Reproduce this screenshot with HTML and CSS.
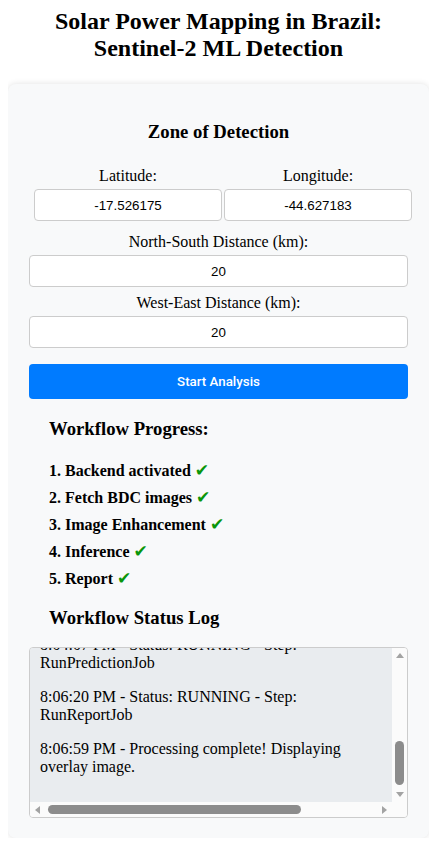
FILE: index.html
```html
<!DOCTYPE html>
<html lang="en">
<head>
<meta charset="utf-8">
<title>Solar Power Mapping in Brazil</title>
<link rel="stylesheet" href="styles.css">
</head>
<body>
<h1 class="title">Solar Power Mapping in Brazil:<br>Sentinel-2 ML Detection</h1>
<div class="card">
  <h3 class="zone-title">Zone of Detection</h3>
  <div class="coords">
    <div class="col">
      <label class="label">Latitude:</label>
      <input class="field" type="text" value="-17.526175">
    </div>
    <div class="col">
      <label class="label">Longitude:</label>
      <input class="field" type="text" value="-44.627183">
    </div>
  </div>
  <label class="label">North-South Distance (km):</label>
  <input class="field field-ns" type="text" value="20">
  <label class="label">West-East Distance (km):</label>
  <input class="field" type="text" value="20">
  <button class="start-btn">Start Analysis</button>

  <div class="progress">
    <h3 class="section-title">Workflow Progress:</h3>
    <ul class="steps">
      <li>1. Backend activated <span class="check">✔</span></li>
      <li>2. Fetch BDC images <span class="check">✔</span></li>
      <li>3. Image Enhancement <span class="check">✔</span></li>
      <li>4. Inference <span class="check">✔</span></li>
      <li>5. Report <span class="check">✔</span></li>
    </ul>
    <h3 class="section-title log-title">Workflow Status Log</h3>
  </div>

  <div class="log">
    <div class="log-view">
      <div class="log-inner">
        <p>7:58:12 PM - Starting analysis...</p>
        <p>7:58:15 PM - Backend activated. Workflow execution started.</p>
        <p>7:59:02 PM - Status: RUNNING - Step: FetchBDCImagesJob</p>
        <p>8:00:41 PM - Status: RUNNING - Step: ImageEnhancementJob</p>
        <p>8:02:10 PM - Status: RUNNING - Step: PrepareInferenceJob</p>
        <p>8:04:07 PM - Status: RUNNING - Step: RunPredictionJob</p>
        <p>8:06:20 PM - Status: RUNNING - Step: RunReportJob</p>
        <p>8:06:59 PM - Processing complete! Displaying overlay image.</p>
      </div>
    </div>
    <div class="vbar">
      <div class="sb-btn"><svg width="8" height="5" viewBox="0 0 8 5"><polygon points="0,5 8,5 4,0" fill="#a3a3a3"/></svg></div>
      <div class="vtrack"><div class="vthumb"></div></div>
      <div class="sb-btn"><svg width="8" height="5" viewBox="0 0 8 5"><polygon points="0,0 8,0 4,5" fill="#a3a3a3"/></svg></div>
    </div>
    <div class="hbar">
      <div class="sb-btn"><svg width="5" height="8" viewBox="0 0 5 8"><polygon points="5,0 5,8 0,4" fill="#a3a3a3"/></svg></div>
      <div class="htrack"><div class="hthumb"></div></div>
      <div class="sb-btn"><svg width="5" height="8" viewBox="0 0 5 8"><polygon points="0,0 0,8 5,4" fill="#a3a3a3"/></svg></div>
    </div>
    <div class="sb-corner"></div>
  </div>
</div>
</body>
</html>
```
FILE: styles.css
```css
html, body {
  background: #ffffff;
}
body {
  margin: 8px;
  font-family: "Liberation Serif", "Times New Roman", serif;
  color: #000;
}
.title {
  font-size: 24px;
  line-height: 27px;
  text-align: center;
  margin: 0 0 22px;
  font-weight: bold;
}
.card {
  background: #f8f9fa;
  border-radius: 8px;
  box-shadow: 0 0 6px rgba(0, 0, 0, 0.12);
  padding: 20px 21px;
}
.zone-title {
  font-size: 18.72px;
  text-align: center;
  margin: 17px 0 24px;
}
.coords {
  display: flex;
  gap: 2px;
  margin: 0 -4px 12px 5px;
}
.col {
  flex: 1;
  display: flex;
  flex-direction: column;
  min-width: 0;
}
.label {
  display: block;
  text-align: center;
  font-family: "Liberation Serif", "Times New Roman", serif;
  font-size: 16px;
  margin-bottom: 4px;
}
.field {
  display: block;
  box-sizing: border-box;
  width: 100%;
  height: 32px;
  margin: 0 0 6px;
  padding: 6px 8px;
  border: 1px solid #ccc;
  border-radius: 4px;
  background: #fff;
  font-family: "Liberation Sans", Arial, sans-serif;
  font-size: 13.33px;
  text-align: center;
  color: #000;
}
.field-ns {
  margin-bottom: 7px;
}
.col .field {
  margin-bottom: 0;
}
.start-btn {
  display: block;
  width: 100%;
  height: 35px;
  margin-top: 16px;
  border: none;
  border-radius: 4px;
  background: #007bff;
  color: #fff;
  font-family: Roboto, "Liberation Sans", sans-serif;
  font-weight: 500;
  font-size: 13.33px;
}
.progress {
  padding: 0 20px;
}
.section-title {
  font-size: 18.72px;
  margin: 19px 0 17px;
}
.steps {
  list-style: none;
  margin: 0;
  padding: 0;
}
.steps li {
  font-family: "Liberation Serif", "Times New Roman", serif;
  font-weight: bold;
  font-size: 16px;
  line-height: 27px;
  height: 27px;
}
.check {
  color: #0a960a;
  font-family: "DejaVu Sans", sans-serif;
  font-weight: normal;
  font-size: 17px;
  line-height: 0;
}
.log-title {
  margin: 15px 0 18px;
}
.log {
  box-sizing: border-box;
  height: 171px;
  border: 1px solid #ccc;
  border-radius: 4px;
  overflow: hidden;
  display: grid;
  grid-template-columns: 1fr 15px;
  grid-template-rows: 1fr 15px;
  background: #fbfbfb;
}
.log-view {
  min-height: 0;
  min-width: 0;
  background: #e9ecef;
  padding: 10px;
  overflow: hidden;
  display: flex;
  flex-direction: column-reverse;
}
.log-inner {
  flex: none;
}
.log p {
  margin: 16px 0;
  font-family: "Liberation Serif", "Times New Roman", serif;
  font-size: 16px;
}
.vbar {
  display: flex;
  flex-direction: column;
  background: #fbfbfb;
  min-height: 0;
}
.hbar {
  display: flex;
  background: #fbfbfb;
}
.sb-btn {
  flex: none;
  width: 15px;
  height: 15px;
  display: flex;
  align-items: center;
  justify-content: center;
}
.sb-btn svg {
  display: block;
}
.vtrack {
  flex: 1;
  display: flex;
  justify-content: center;
}
.vthumb {
  width: 9px;
  height: 44px;
  margin-top: 78px;
  border-radius: 5px;
  background: #8c8c8c;
}
.htrack {
  flex: 1;
  display: flex;
  align-items: center;
}
.hthumb {
  height: 9px;
  width: 253px;
  margin-left: 3px;
  border-radius: 5px;
  background: #8c8c8c;
}
.sb-corner {
  background: #fbfbfb;
}
```
